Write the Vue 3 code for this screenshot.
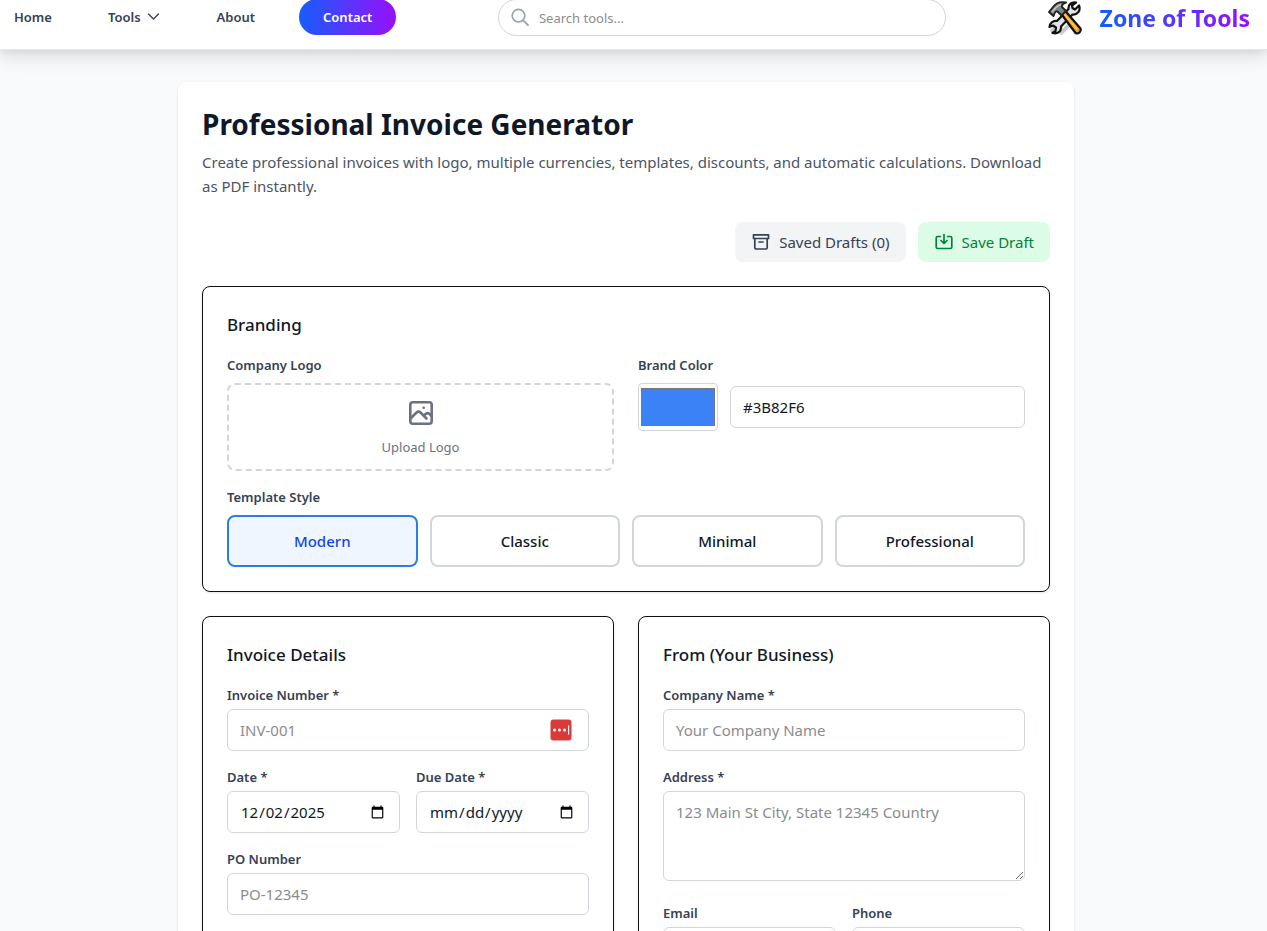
<template>
  <div class="page">
    <header class="topbar">
      <nav class="nav">
        <a href="#" class="navLink">Home</a>
        <a href="#" class="navLink">
          Tools
          <svg class="chevron" viewBox="0 0 14 12" width="14" height="12">
            <path d="M1.500 3l5 5 5-5" fill="none" stroke="currentColor" stroke-width="1.4" stroke-linecap="round" stroke-linejoin="round" />
          </svg>
        </a>
        <a href="#" class="navLink">About</a>
        <a href="#" class="contact">Contact</a>
      </nav>

      <div class="search">
        <svg viewBox="0 0 20 20" width="20" height="20">
          <circle cx="7.500" cy="7.700" r="6.300" fill="none" stroke="currentColor" stroke-width="1.7" />
          <path d="M12 12.200l5 5" fill="none" stroke="currentColor" stroke-width="1.900" stroke-linecap="round" />
        </svg>
        <input type="text" v-model="busqueda" placeholder="Search tools..." aria-label="Search tools" />
      </div>

      <a href="#" class="logo">
        <svg viewBox="0 0 34 34" width="34" height="34">
          <path
            d="M3 31l22-22M12 33l10-10"
            fill="none"
            stroke="#c9c9c9"
            stroke-width="4"
          />
          <path
            d="M31 4.500l-4 4-2.500-1.500-.5-2.500 4-3c-4-1-8 2-7.500 6.500L9 20c-4-.5-7.500 2-7.500 6l3.500-1.500 3 2-.5 3.500-3 2c5 1.500 9-1.500 8.500-6.500L24.500 13.500c5 .5 8.500-4 6.500-9z"
            fill="#dfe3e5"
            stroke="#111"
            stroke-width="2.200"
            stroke-linejoin="round"
          />
          <path
            d="M13 12.500l3.500-3.500 16 18.500c1 3-2 6-5 4.500z"
            fill="#eda31c"
            stroke="#111"
            stroke-width="2.200"
            stroke-linejoin="round"
          />
          <path d="M16 13l13 15" stroke="#ffcb52" stroke-width="1.500" />
          <path
            d="M1 11l4-5c3-4 8-5.500 13-4.500-3 1-4.500 2.500-4 4.500l4 4-4.500 4.500-4-4c-1.500-.5-2.500.5-3 2L5.500 15z"
            fill="#7f8588"
            stroke="#222"
            stroke-width="1.900"
            stroke-linejoin="round"
          />
          <path d="M4 11l4-4.500c1.500-1.500 3-2.500 5-3" fill="none" stroke="#c5c9cb" stroke-width="1.500" />
        </svg>
        <span>Zone of Tools</span>
      </a>
    </header>

    <main class="main">
      <div class="card">
        <h1>Professional Invoice Generator</h1>
        <p class="intro">
          Create professional invoices with logo, multiple currencies, templates, discounts, and
          automatic calculations. Download as PDF instantly.
        </p>

        <div class="actions">
          <button type="button" class="btn btnGray">
            <svg viewBox="0 0 20 20" width="20" height="20" fill="none" stroke="currentColor" stroke-width="1.7" stroke-linejoin="round" stroke-linecap="round">
              <path d="M2.500 2.800h15v3.700h-15zM3.800 6.500v9.200a1.300 1.300 0 0 0 1.300 1.300h9.800a1.300 1.300 0 0 0 1.300-1.300V6.500M8 10h4" />
            </svg>
            Saved Drafts ({{ borradores.length }})
          </button>
          <button type="button" class="btn btnGreen" @click="guardar">
            <svg viewBox="0 0 20 20" width="20" height="20" fill="none" stroke="currentColor" stroke-width="1.7" stroke-linejoin="round" stroke-linecap="round">
              <path d="M6.500 4.500H3.700a1.500 1.500 0 0 0-1.500 1.500v9a1.500 1.500 0 0 0 1.500 1.500h12.600a1.500 1.500 0 0 0 1.500-1.500V6a1.500 1.500 0 0 0-1.500-1.500h-2.800M10 2.500v8.700M7 8.500l3 3 3-3" />
            </svg>
            Save Draft
          </button>
        </div>

        <section class="panel">
          <h2>Branding</h2>
          <div class="cols">
            <div>
              <label for="logo" class="labelWide">Company Logo</label>
              <button type="button" id="logo" class="upload">
                <svg viewBox="0 0 32 32" width="32" height="32" fill="none" stroke="currentColor" stroke-width="2.600" stroke-linecap="round" stroke-linejoin="round">
                  <rect x="5.300" y="5.300" width="21.400" height="21.400" rx="2.500" />
                  <path d="M5.500 21.500l6-6q2-1.800 4 0l6 6M18.800 18.800l1.800-1.800q2-1.800 4 0l2 2" />
                  <path d="M18.700 10.700h.01" />
                </svg>
                <span>Upload Logo</span>
              </button>
            </div>
            <div>
              <label for="color" class="labelWide">Brand Color</label>
              <div class="colorRow">
                <input type="color" id="color" v-model="color" class="swatch" />
                <input type="text" :value="color.toUpperCase()" class="input" aria-label="Brand color hex" />
              </div>
            </div>
          </div>

          <div class="templates" role="group" aria-labelledby="templateStyle">
            <span id="templateStyle" class="labelWide">Template Style</span>
            <div class="templateGrid">
              <button
                v-for="p in plantillas"
                :key="p"
                type="button"
                class="template"
                :class="{ selected: p === plantilla }"
                @click="plantilla = p"
              >
                {{ p }}
              </button>
            </div>
          </div>
        </section>

        <div class="cols forms">
          <section class="panel">
            <h2>Invoice Details</h2>
            <div class="field">
              <label for="invoiceNumber">Invoice Number *</label>
              <div class="withBadge">
                <input type="text" id="invoiceNumber" v-model="factura.numero" placeholder="INV-001" class="input" />
                <svg class="badge" viewBox="0 0 22 22" width="22" height="22">
                  <rect x="0.500" y="0.500" width="21" height="21" rx="3" fill="#db3a3a" />
                  <circle cx="4.500" cy="11" r="1.500" fill="#fff" />
                  <circle cx="9.500" cy="11" r="1.500" fill="#fff" />
                  <circle cx="14.500" cy="11" r="1.500" fill="#fff" />
                  <rect x="18" y="6.500" width="1.200" height="9" fill="#fff" />
                </svg>
              </div>
            </div>
            <div class="pair">
              <div class="field">
                <label for="date">Date *</label>
                <input type="date" id="date" v-model="factura.fecha" class="input" />
              </div>
              <div class="field">
                <label for="dueDate">Due Date *</label>
                <input type="date" id="dueDate" v-model="factura.vence" class="input" />
              </div>
            </div>
            <div class="field">
              <label for="po">PO Number</label>
              <input type="text" id="po" v-model="factura.po" placeholder="PO-12345" class="input" />
            </div>
          </section>

          <section class="panel">
            <h2>From (Your Business)</h2>
            <div class="field">
              <label for="company">Company Name *</label>
              <input type="text" id="company" v-model="empresa.nombre" placeholder="Your Company Name" class="input" />
            </div>
            <div class="field address">
              <label for="address">Address *</label>
              <textarea id="address" v-model="empresa.direccion" placeholder="123 Main St City, State 12345 Country" class="input"></textarea>
            </div>
            <div class="pair">
              <div class="field">
                <label for="email">Email</label>
                <input type="email" id="email" v-model="empresa.correo" class="input" />
              </div>
              <div class="field">
                <label for="phone">Phone</label>
                <input type="tel" id="phone" v-model="empresa.telefono" class="input" />
              </div>
            </div>
          </section>
        </div>
      </div>
    </main>
  </div>
</template>

<script setup>
import { ref } from "vue";

const plantillas = ["Modern", "Classic", "Minimal", "Professional"];

let busqueda = ref("");
let borradores = ref([]);
let color = ref("#3b82f6");
let plantilla = ref("Modern");
let factura = ref({ numero: "", fecha: "2025-12-02", vence: "", po: "" });
let empresa = ref({ nombre: "", direccion: "", correo: "", telefono: "" });

const guardar = () => {
  borradores.value.push({
    color: color.value,
    plantilla: plantilla.value,
    factura: { ...factura.value },
    empresa: { ...empresa.value },
  });
};
</script>

<style>
body {
  background-color: #f9fafb;
}
</style>

<style scoped>
* {
  box-sizing: border-box;
  margin: 0;
}

.page {
  height: 100vh;
  overflow: hidden;
  background-color: #f9fafb;
  color: #101828;
  font-family: "Segoe UI", "Noto Sans", sans-serif;
  font-size: 15px;
  line-height: 24px;
}

button,
input,
textarea {
  font: inherit;
  color: inherit;
}

button {
  cursor: pointer;
}

a {
  text-decoration: none;
}

svg {
  display: block;
  flex-shrink: 0;
}

.topbar {
  display: flex;
  justify-content: space-between;
  align-items: flex-start;
  margin-top: -1px;
  padding: 0 17px 12px 2px;
  background-color: white;
  border-bottom: 1px solid #e5e7eb;
  box-shadow: 0 8px 18px rgb(0 0 0 / 0.1), 0 3px 6px rgb(0 0 0 / 0.06);
}

.nav {
  display: flex;
  align-items: center;
  gap: 32px;
  font-size: 13px;
  font-weight: 600;
}

.navLink {
  display: flex;
  align-items: center;
  gap: 6px;
  padding: 0 12px;
  color: #364153;
}

.contact {
  padding: 6px 24px;
  border-radius: 18px;
  background: linear-gradient(90deg, #155dfc, #9810fa);
  color: white;
  font-weight: 600;
}

.search {
  display: flex;
  align-items: center;
  gap: 8px;
  width: 448px;
  height: 37px;
  padding: 0 12px;
  border: 1px solid #d1d5dc;
  border-radius: 19px;
  color: #99a1af;
}

.search input {
  flex: 1;
  min-width: 0;
  padding: 0;
  border: none;
  outline: none;
  background: none;
  font-size: 13px;
  line-height: 20px;
  color: #101828;
}

.logo {
  display: flex;
  align-items: center;
  gap: 18px;
  height: 38px;
  font-size: 23px;
  font-weight: 700;
}

.logo span {
  background: linear-gradient(90deg, #155dfc, #9810fa);
  background-clip: text;
  color: transparent;
}

.main {
  padding: 32px 31px 32px 16px;
}

.card {
  max-width: 896px;
  margin: 0 auto;
  padding: 24px;
  background-color: white;
  border-radius: 8px;
  box-shadow: 0 1px 3px rgb(0 0 0 / 0.1);
}

h1 {
  margin-bottom: 8px;
  font-size: 28px;
  line-height: 36px;
  font-weight: 700;
}

.intro {
  color: #4a5565;
}

.actions {
  display: flex;
  justify-content: flex-end;
  gap: 12px;
  margin: 24px 0;
}

.btn {
  display: flex;
  align-items: center;
  gap: 8px;
  padding: 8px 16px;
  border: none;
  border-radius: 8px;
}

.btnGray {
  background-color: #f3f4f6;
  color: #364153;
}

.btnGreen {
  background-color: #dcfce7;
  color: #008236;
}

.panel {
  padding: 24px;
  border: 1px solid #101010;
  border-radius: 8px;
  background-color: white;
  box-shadow: 0 1px 3px rgb(0 0 0 / 0.1);
}

h2 {
  margin-bottom: 16px;
  font-size: 17px;
  line-height: 28px;
  font-weight: 500;
}

.cols {
  display: grid;
  grid-template-columns: 1fr 1fr;
  gap: 24px;
}

.forms {
  margin-top: 24px;
}

label,
.labelWide {
  display: block;
  margin-bottom: 4px;
  font-size: 13px;
  line-height: 20px;
  font-weight: 600;
  color: #364153;
}

.labelWide {
  margin-bottom: 8px;
}

.upload {
  display: flex;
  flex-direction: column;
  align-items: center;
  justify-content: center;
  gap: 8px;
  width: 100%;
  height: 88px;
  border: 2px dashed #d1d5dc;
  border-radius: 8px;
  background: none;
  color: #6a7282;
  font-size: 13px;
  line-height: 20px;
}

.colorRow {
  display: flex;
  align-items: center;
  gap: 12px;
}

.swatch {
  flex-shrink: 0;
  width: 80px;
  height: 48px;
  padding: 0;
  border: 1px solid #d1d5dc;
  border-radius: 4px;
  background-color: white;
}

.input {
  display: block;
  width: 100%;
  min-width: 0;
  height: 42px;
  padding: 8px 12px;
  border: 1px solid #d1d5dc;
  border-radius: 6px;
  background-color: white;
}

.input::placeholder,
.search input::placeholder {
  color: #8c8c8c;
}

textarea.input {
  height: 90px;
  resize: vertical;
}

.templates {
  margin-top: 16px;
}

.templateGrid {
  display: grid;
  grid-template-columns: repeat(4, 1fr);
  gap: 12px;
}

.template {
  padding: 12px;
  border: 2px solid #d1d5dc;
  border-radius: 8px;
  background-color: white;
  font-weight: 500;
}

.selected {
  border-color: #2b7fdf;
  background-color: #eff6ff;
  color: #1447e6;
}

.field + .field,
.field + .pair,
.pair + .field {
  margin-top: 16px;
}

.pair {
  display: grid;
  grid-template-columns: 1fr 1fr;
  gap: 16px;
}

.pair .field + .field {
  margin-top: 0;
}

.address {
  padding-bottom: 6px;
}

.withBadge {
  position: relative;
}

.badge {
  position: absolute;
  top: 10px;
  right: 17px;
}
</style>
